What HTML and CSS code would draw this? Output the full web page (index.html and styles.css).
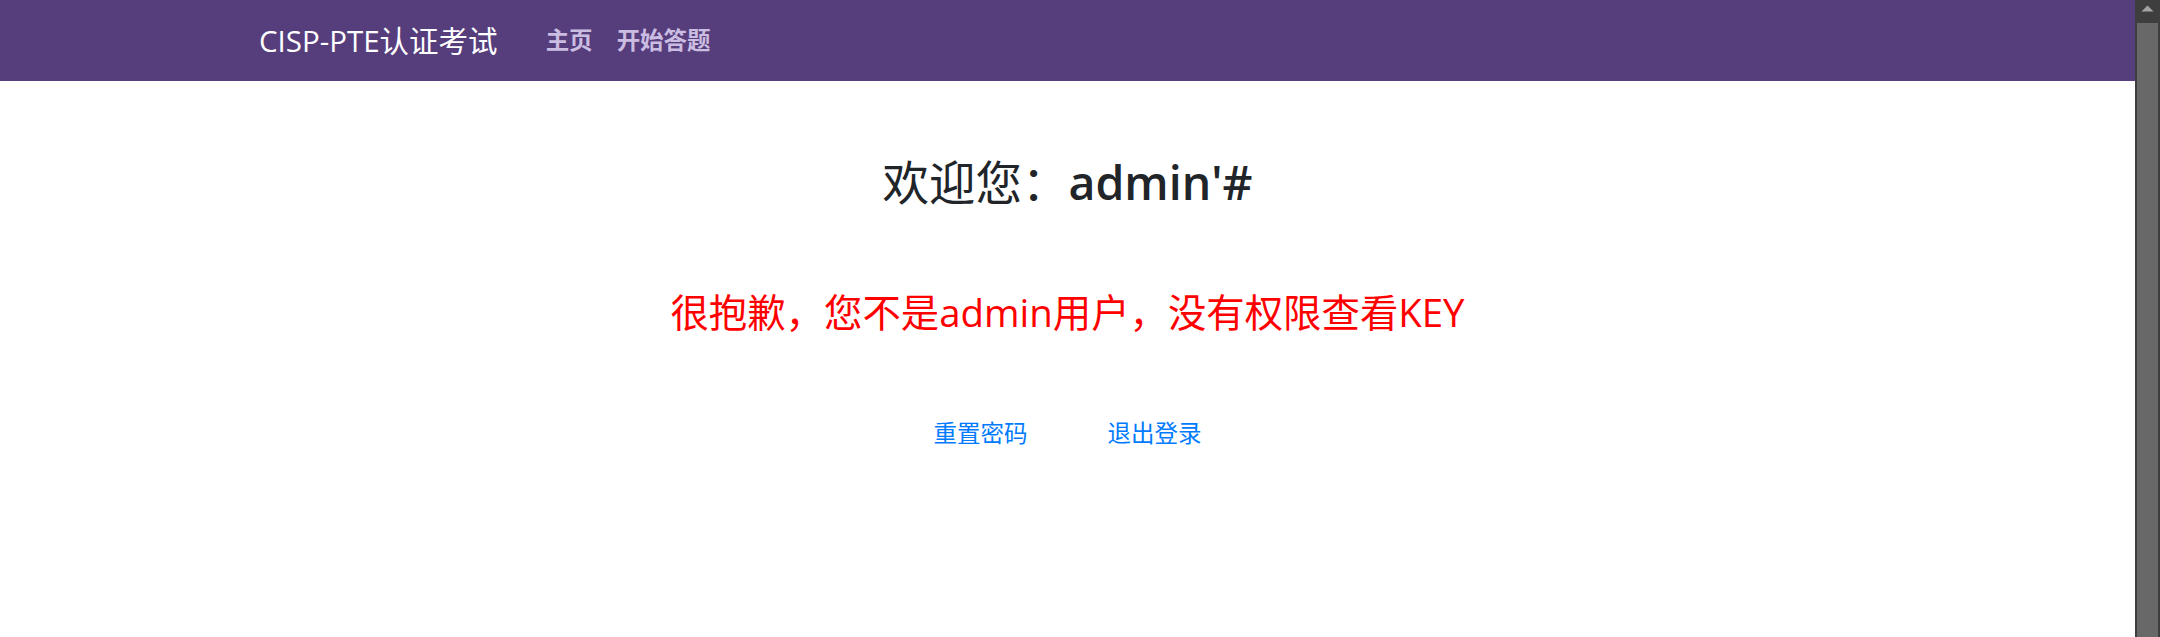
FILE: index.html
```html
<!DOCTYPE html>
<html lang="zh-CN">
<head>
<meta charset="utf-8">
<title>CISP-PTE认证考试</title>
<link rel="stylesheet" href="styles.css">
</head>
<body>
<div class="page">
  <div class="view">
    <header class="navbar">
      <a class="brand" href="#">CISP-PTE认证考试</a>
      <nav class="nav">
        <a class="nav-link" href="#">主页</a>
        <a class="nav-link" href="#">开始答题</a>
      </nav>
    </header>
    <main class="content">
      <h2 class="welcome">欢迎您：<span class="user">admin'#</span></h2>
      <h3 class="warning">很抱歉，您不是admin用户，没有权限查看KEY</h3>
      <div class="actions">
        <a class="action" href="#">重置密码</a>
        <a class="action" href="#">退出登录</a>
      </div>
    </main>
  </div>
  <div class="scrollbar" aria-hidden="true">
    <div class="scroll-up">
      <svg width="25" height="22" viewBox="0 0 25 22"><polygon points="6.5,11.5 12.5,5.5 18.5,11.5" fill="#a3a3a3"/></svg>
    </div>
    <div class="scroll-thumb"></div>
  </div>
</div>
</body>
</html>
```

FILE: styles.css
```css
html, body {
  margin: 0;
  height: 100%;
  overflow: hidden;
}
body {
  background: #ffffff;
  font-family: "Open Sans", "Noto Sans CJK SC", sans-serif;
  color: #212529;
}
.page {
  display: flex;
  height: 100%;
}
.view {
  flex: 1;
  min-width: 0;
}

.scrollbar {
  width: 25px;
  flex: none;
  display: flex;
  flex-direction: column;
  background: #3e3e3e;
}
.scroll-up {
  height: 22px;
  flex: none;
}
.scroll-up svg {
  display: block;
}
.scroll-thumb {
  flex: 1;
  margin: 1px 2px 0 2px;
  background: #686868;
}

.navbar {
  display: flex;
  align-items: center;
  height: 81px;
  padding-left: 259px;
  background: #563d7c;
}
.brand {
  font-size: 29.5px;
  color: #ffffff;
  text-decoration: none;
  margin-right: 36px;
  line-height: 1;
}
.nav {
  display: flex;
}
.nav-link {
  padding: 0 12px;
  font-size: 23.5px;
  font-weight: 700;
  color: #cbbde2;
  text-decoration: none;
  line-height: 1;
}

.content {
  display: flex;
  flex-direction: column;
  align-items: center;
  text-align: center;
}
.welcome {
  margin: 74px 0 0;
  font-size: 46.5px;
  font-weight: 400;
  line-height: 1.2;
  color: #212529;
}
.user {
  font-weight: 600;
}
.warning {
  margin: 78px 0 0;
  font-size: 38.4px;
  font-weight: 400;
  line-height: 1.2;
  color: #ff0000;
}
.actions {
  display: flex;
  gap: 80px;
  margin-top: 81px;
}
.action {
  font-size: 23.5px;
  line-height: 1.5;
  color: #007bff;
  text-decoration: none;
}
```
